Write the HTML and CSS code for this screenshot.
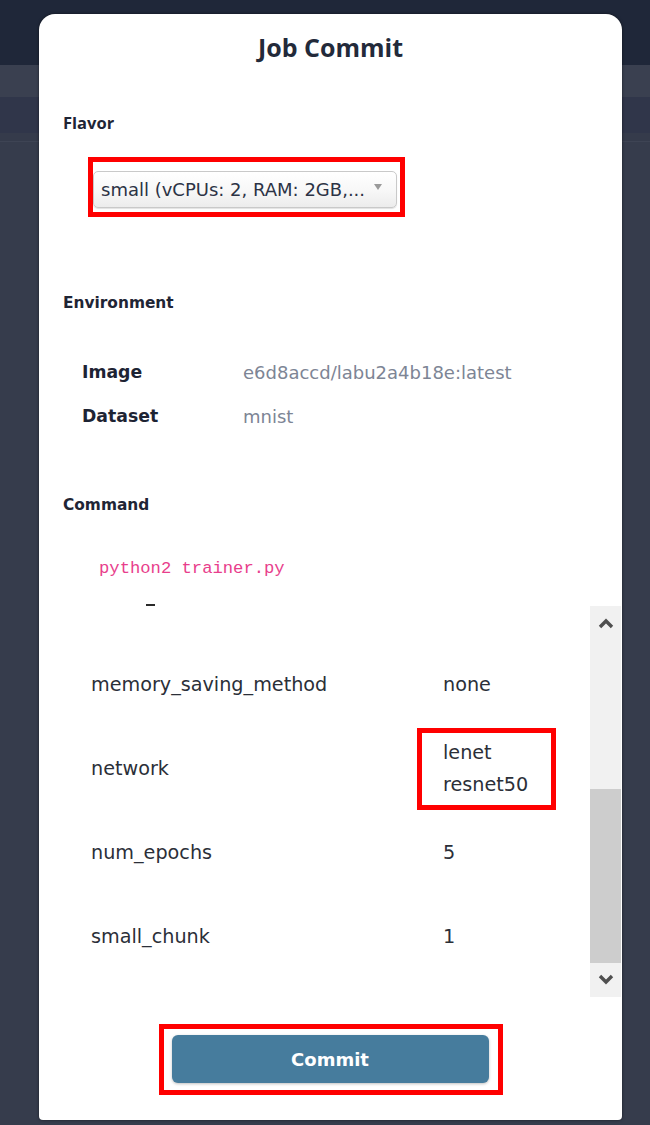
FILE: index.html
```html
<!DOCTYPE html>
<html>
<head>
<meta charset="utf-8">
<title>Job Commit</title>
<link rel="stylesheet" href="styles.css">
</head>
<body>
<div class="backdrop">
  <div class="topbar"></div>
  <div class="band band-a"></div>
  <div class="band band-b"></div>
  <div class="band band-c"></div>
  <div class="band-line"></div>
</div>

<div class="modal">
  <h1 class="title">Job Commit</h1>

  <h2 class="heading heading-flavor">Flavor</h2>
  <div class="mark mark-select">
    <div class="select">
      <span class="select-text">small (vCPUs: 2, RAM: 2GB,...</span>
      <span class="select-arrow"></span>
    </div>
  </div>

  <h2 class="heading heading-env">Environment</h2>
  <div class="env">
    <div class="env-label">Image</div>
    <div class="env-value">e6d8accd/labu2a4b18e:latest</div>
    <div class="env-label">Dataset</div>
    <div class="env-value">mnist</div>
  </div>

  <h2 class="heading heading-cmd">Command</h2>
  <div class="cmd"><code>python2 trainer.py</code></div>
  <div class="cmd-dash"></div>

  <div class="params">
    <div class="params-body">
      <div class="prow">
        <div class="pkey">memory_saving_method</div>
        <div class="pval">none</div>
      </div>
      <div class="prow prow-net">
        <div class="pkey">network</div>
        <div class="pval mark mark-net">
          <div>lenet</div>
          <div>resnet50</div>
        </div>
      </div>
      <div class="prow">
        <div class="pkey">num_epochs</div>
        <div class="pval">5</div>
      </div>
      <div class="prow">
        <div class="pkey">small_chunk</div>
        <div class="pval">1</div>
      </div>
    </div>
    <div class="scrollbar">
      <div class="sb-btn">
        <svg width="16" height="12" viewBox="0 0 16 12"><path d="M2 10 L8 4 L14 10" fill="none" stroke="#4f4f4f" stroke-width="3.4"/></svg>
      </div>
      <div class="sb-track"></div>
      <div class="sb-thumb"></div>
      <div class="sb-btn">
        <svg width="16" height="12" viewBox="0 0 16 12"><path d="M2 2 L8 8 L14 2" fill="none" stroke="#4f4f4f" stroke-width="3.4"/></svg>
      </div>
    </div>
  </div>

  <div class="footer">
    <div class="mark mark-btn">
      <button class="commit">Commit</button>
    </div>
  </div>
</div>
</body>
</html>
```
FILE: styles.css
```css
* { box-sizing: border-box; }

html, body {
  margin: 0;
  padding: 0;
}

body {
  width: 650px;
  height: 1125px;
  overflow: hidden;
  background: #363c4c;
  font-family: "DejaVu Sans", sans-serif;
  position: relative;
}

.topbar { height: 65px; background: #1f2739; }
.band-a { height: 32px; background: #3a4050; }
.band-b { height: 36px; background: #30364a; }
.band-c { height: 8px; background: #353b4b; }
.band-line { height: 1px; background: #3e4454; }

.modal {
  position: absolute;
  left: 39px;
  top: 14px;
  width: 583px;
  height: 1106px;
  background: #ffffff;
  border-radius: 16px 16px 4px 4px;
  box-shadow: 0 0 3px rgba(0, 0, 0, 0.55);
  display: flex;
  flex-direction: column;
  color: #1f2535;
}

.title {
  margin: 18px 0 0;
  height: 30px;
  line-height: 30px;
  text-align: center;
  font-family: "Open Sans", sans-serif;
  font-weight: 700;
  font-size: 25px;
  color: #232a3a;
}

.heading {
  margin: 0 0 0 24px;
  height: 20px;
  line-height: 20px;
  font-weight: 700;
  font-size: 15.4px;
  color: #1f2535;
}

.heading-flavor {
  margin-top: 51px;
  font-family: "Open Sans", sans-serif;
  font-size: 16.5px;
}

.mark {
  border: 5px solid #ff0000;
}

.mark-select {
  margin: 24px 0 0 49px;
  width: 317px;
  height: 60px;
  padding: 9px 3px 4px 0;
}

.select {
  height: 37px;
  border: 1px solid #c9c9c9;
  border-radius: 5px;
  background: linear-gradient(#ffffff 0%, #f7f7f7 55%, #ececec 100%);
  box-shadow: 0 1px 1px rgba(0, 0, 0, 0.12);
  display: flex;
  align-items: center;
  padding: 0 14px 0 7px;
}

.select-text {
  flex: 1;
  font-size: 18px;
  color: #2c3345;
  white-space: nowrap;
}

.select-arrow {
  width: 0;
  height: 0;
  border-left: 4px solid transparent;
  border-right: 4px solid transparent;
  border-top: 6px solid #9a9a9a;
  margin-bottom: 6px;
}

.heading-env { margin-top: 76px; }

.env {
  margin: 37px 0 0 43px;
  display: grid;
  grid-template-columns: 161px 1fr;
  grid-auto-rows: 44px;
  align-items: center;
}

.env-label {
  font-weight: 700;
  font-size: 17.3px;
  color: #1d2333;
}

.env-value {
  font-size: 18px;
  color: #7d8595;
}

.heading-cmd { margin-top: 57px; }

.cmd {
  margin: 41px 0 0 60px;
  height: 24px;
  line-height: 24px;
}

.cmd code {
  font-family: "Liberation Mono", "DejaVu Sans Mono", monospace;
  font-size: 17.2px;
  color: #e83e8c;
}

.cmd-dash {
  margin: 24px 0 0 107px;
  width: 9px;
  height: 2px;
  background: #2a2a2a;
}

.params {
  margin-top: 0;
  height: 391px;
  display: flex;
  padding-right: 1px;
}

.params-body {
  flex: 1;
  overflow: hidden;
  padding: 37px 0 0 52px;
  color: #2b2f38;
  font-size: 19.2px;
}

.prow {
  display: grid;
  grid-template-columns: 326px 1fr;
  align-items: center;
  padding: 26px 0;
  line-height: 32px;
}

.prow-net { padding: 1px 0; }

.pval { padding-left: 26px; }

.mark-net {
  width: 139px;
  height: 82px;
  padding: 4px 0 0 21px;
}

.scrollbar {
  width: 31px;
  display: flex;
  flex-direction: column;
  background: #f1f1f1;
}

.sb-btn {
  height: 34px;
  display: flex;
  align-items: center;
  justify-content: center;
}

.sb-track { height: 149px; }

.sb-thumb {
  flex: 1;
  background: #cdcdcd;
}

.footer {
  margin-top: 27px;
  display: flex;
  justify-content: center;
}

.mark-btn {
  width: 344px;
  height: 71px;
  padding: 6px 9px 7px 8px;
}

.commit {
  width: 100%;
  height: 100%;
  border: none;
  border-radius: 6px;
  background: #467c9d;
  color: #ffffff;
  font-family: "DejaVu Sans", sans-serif;
  font-weight: 700;
  font-size: 18px;
  box-shadow: 0 1px 3px rgba(0, 0, 0, 0.25);
}
```
